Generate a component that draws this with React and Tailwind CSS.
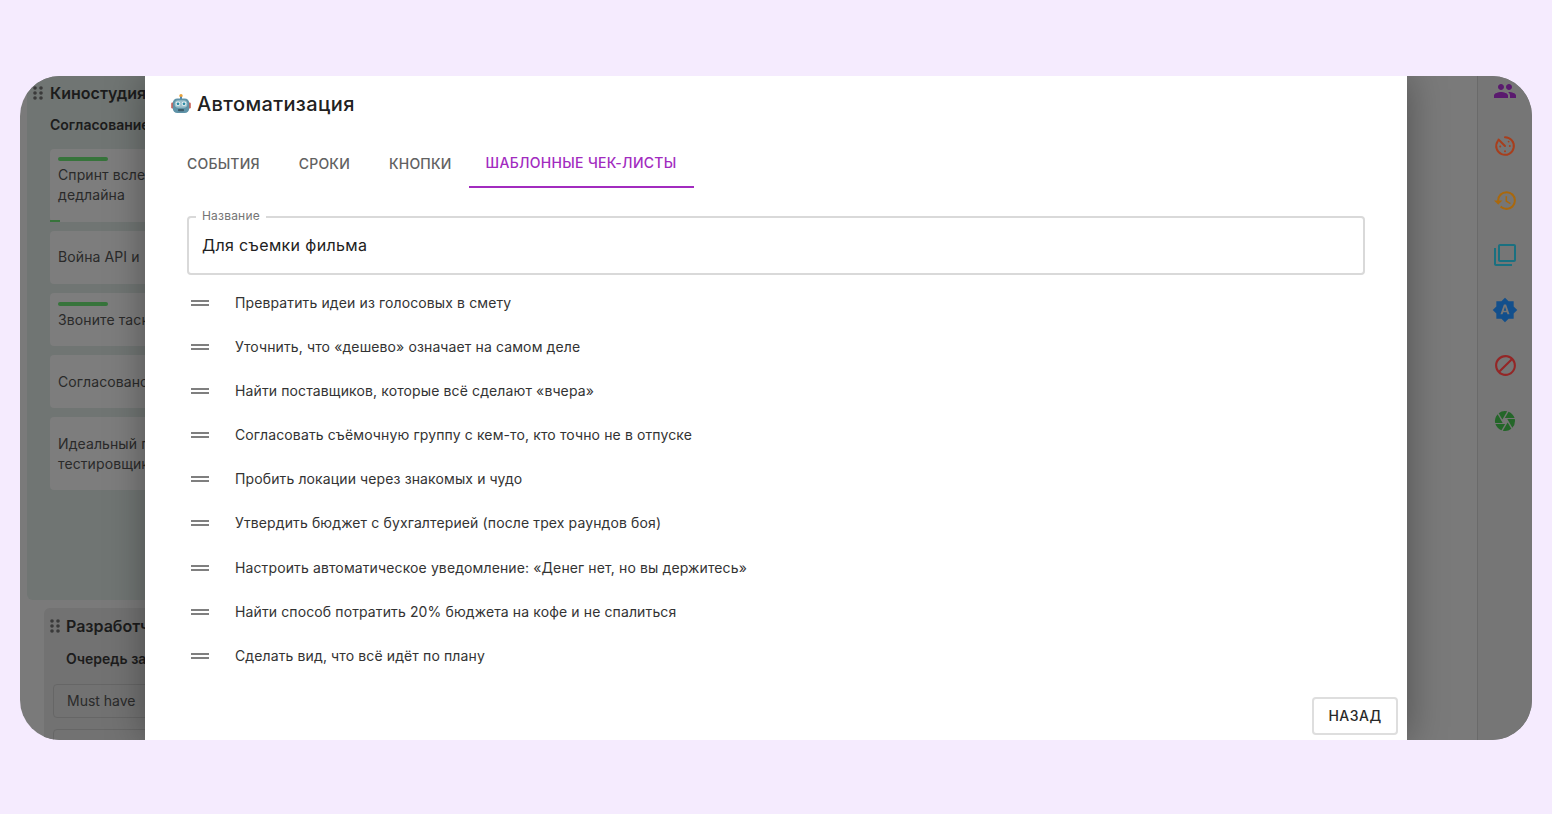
import React from "react";
import { MdPeople, MdHistory, MdFilterNone, MdBrightnessAuto, MdBlock, MdCamera } from "react-icons/md";

const F = { fontFamily: '"Inter", "Liberation Sans", sans-serif' };

const items = [
  "Превратить идеи из голосовых в смету",
  "Уточнить, что «дешево» означает на самом деле",
  "Найти поставщиков, которые всё сделают «вчера»",
  "Согласовать съёмочную группу с кем-то, кто точно не в отпуске",
  "Пробить локации через знакомых и чудо",
  "Утвердить бюджет с бухгалтерией (после трех раундов боя)",
  "Настроить автоматическое уведомление: «Денег нет, но вы держитесь»",
  "Найти способ потратить 20% бюджета на кофе и не спалиться",
  "Сделать вид, что всё идёт по плану",
];

function Grip({ className }) {
  return (
    <svg viewBox="0 0 10 14" className={className} fill="currentColor">
      <circle cx="2" cy="2" r="1.8" /><circle cx="8" cy="2" r="1.8" />
      <circle cx="2" cy="7" r="1.8" /><circle cx="8" cy="7" r="1.8" />
      <circle cx="2" cy="12" r="1.8" /><circle cx="8" cy="12" r="1.8" />
    </svg>
  );
}

function Robot() {
  return (
    <svg viewBox="0 0 20 20" className="w-5 h-5 shrink-0">
      <circle cx="10" cy="1.8" r="1.7" fill="#e9a23b" />
      <rect x="9" y="2.8" width="2" height="2.2" fill="#4f84b0" />
      <rect x="0.2" y="8.5" width="3" height="6" rx="1.2" fill="#c9625a" />
      <rect x="16.8" y="8.5" width="3" height="6" rx="1.2" fill="#c9625a" />
      <rect x="1.8" y="4.5" width="16.4" height="14.5" rx="4.5" fill="#5f93a8" />
      <rect x="3.6" y="6.2" width="12.8" height="7.6" rx="3.8" fill="#9fc1cc" />
      <circle cx="7" cy="9.8" r="2.3" fill="#e9f2f4" />
      <circle cx="13" cy="9.8" r="2.3" fill="#e9f2f4" />
      <circle cx="7" cy="9.8" r="1.4" fill="#2b8aa6" />
      <circle cx="13" cy="9.8" r="1.4" fill="#2b8aa6" />
      <rect x="7" y="15" width="6" height="2.2" rx="0.8" fill="#3d5a68" />
    </svg>
  );
}

function TimerIcon() {
  return (
    <svg viewBox="0 0 24 24" className="w-[24px] h-[24px]" fill="none" stroke="currentColor" strokeWidth="2">
      <path d="M12 3.2A8.8 8.8 0 1 1 4.8 7" strokeLinecap="round" />
      <path d="M5.5 5.5l6.5 6.5" strokeWidth="2" strokeLinecap="round" />
      <circle cx="7.2" cy="12.5" r="1" fill="currentColor" stroke="none" />
      <circle cx="12" cy="17.2" r="1" fill="currentColor" stroke="none" />
      <circle cx="16.8" cy="12" r="1" fill="currentColor" stroke="none" />
      <circle cx="15.6" cy="7.6" r="0.9" fill="currentColor" stroke="none" />
    </svg>
  );
}

function BoardCard({ children, bar, className = "" }) {
  return (
    <div className={`relative w-[200px] rounded-[4px] bg-[#7d7d7d] pl-2 pt-2 text-sm leading-5 tracking-[0.1px] text-[#2a2a2a] whitespace-nowrap ${className}`}>
      {bar && <div className="h-1 w-[50px] rounded-sm bg-[#37743b] mb-1" />}
      {children}
    </div>
  );
}

export default function App() {
  return (
    <div style={F} className="min-h-[814px] bg-[#f5ebfe] pt-[76px] px-5">
      <div className="relative h-[664px] overflow-hidden rounded-[40px] bg-[#7a7a7a] flex">
        {/* Board behind the dialog */}
        <div className="flex-1 pl-[7px] overflow-hidden">
          <div className="h-[524px] w-[300px] rounded-[6px] bg-[#707573] pt-[7px] pl-[6px]">
            <div className="flex items-center gap-[7px] text-[#1c1c1c] h-5">
              <Grip className="w-[10px] h-[14px] text-[#3a3a3a]" />
              <span className="text-base font-semibold whitespace-nowrap">Киностудия</span>
            </div>
            <div className="ml-[17px] mt-[12px] mb-[14px] text-sm font-semibold text-[#1c1c1c] whitespace-nowrap leading-5">Согласование</div>
            <div className="ml-[17px] flex flex-col gap-[9px]">
              <BoardCard bar className="h-[73px]">
                Спринт вслед<br />дедлайна
                <div className="absolute left-0 bottom-0 h-[2px] w-[10px] bg-[#37743b]" />
              </BoardCard>
              <BoardCard className="h-[53px] !pt-[16px]">Война API и</BoardCard>
              <BoardCard bar className="h-[53px] !pt-[9px]">Звоните таск</BoardCard>
              <BoardCard className="h-[53px] !pt-[17px]">Согласовано</BoardCard>
              <BoardCard className="h-[73px] !pt-[17px]">Идеальный п<br />тестировщик</BoardCard>
            </div>
          </div>
          <div className="ml-[17px] mt-[8px] w-[300px] rounded-t-[6px] bg-[#727272] pl-[6px] pt-[8px] h-[140px]">
            <div className="flex items-center gap-[6px] text-[#1c1c1c] h-5">
              <Grip className="w-[10px] h-[14px] text-[#3a3a3a]" />
              <span className="text-base font-semibold whitespace-nowrap">Разработчики</span>
            </div>
            <div className="ml-[16px] mt-[13px] text-sm font-semibold text-[#1c1c1c] whitespace-nowrap leading-5">Очередь задач</div>
            <div className="ml-[3px] mt-[15px] h-[34px] w-[200px] rounded-[4px] border border-[#666] pl-[13px] text-sm leading-[32px] text-[#2a2a2a]">Must have</div>
            <div className="ml-[3px] mt-[11px] h-[34px] w-[200px] rounded-[4px] border border-[#666]" />
          </div>
        </div>

        {/* Right rail */}
        <div className="w-[55px] shrink-0 border-l border-[#6a6a6a] bg-[#767676] flex flex-col items-center pt-[3px] gap-[30.8px]">
          <MdPeople size={24} className="text-[#5a1a6e]" />
          <div className="text-[#a83e1c]"><TimerIcon /></div>
          <MdHistory size={25} className="text-[#a9680d] -my-[0.5px]" />
          <MdFilterNone size={24} className="text-[#1a7080]" />
          <MdBrightnessAuto size={26} className="text-[#124f8c] -my-[1px]" />
          <MdBlock size={25} className="text-[#942626]" />
          <MdCamera size={24} className="text-[#246629]" />
        </div>

        {/* Dialog */}
        <div className="absolute left-[125px] top-0 bottom-0 w-[1262px] bg-white shadow-[0_0_36px_rgba(0,0,0,0.35)] text-[#212121]">
          <div className="flex items-center gap-[6px] pl-[26px] h-[56px]">
            <Robot />
            <h2 className="text-[20px] font-medium leading-[24px] tracking-[0.38px]">Автоматизация</h2>
          </div>
          <div className="flex items-start pl-[25px] h-[56px] text-sm font-medium tracking-[0.2px] uppercase text-[#616161]">
            <div className="px-[17px] h-[56px] pt-[8px] flex items-center">События</div>
            <div className="ml-[5px] px-[17px] h-[56px] pt-[8px] flex items-center">Сроки</div>
            <div className="ml-[5px] px-[17px] h-[56px] pt-[8px] flex items-center">Кнопки</div>
            <div className="px-[17px] h-[56px] pt-[8px] flex items-center text-[#a22bbf] border-b-2 border-[#a22bbf] tracking-[0.3px]">Шаблонные чек-листы</div>
          </div>

          <div className="relative mx-[42px] mt-[28px] h-[59px] w-[1178px] rounded-[4px] border-2 border-[#d9d9d9] pl-[13px] pb-[2px] flex items-center">
            <span className="absolute left-[7px] -top-[9px] bg-white px-[6px] text-xs leading-[14px] tracking-[0.2px] text-[#757575]">Название</span>
            <span className="text-base tracking-[0.35px] text-[#212121]">Для съемки фильма</span>
          </div>

          <ul className="mt-[5.9px] ml-[46px]">
            {items.map((t) => (
              <li key={t} className="flex items-center h-[44.1px] gap-[26px] text-sm tracking-[0.12px] text-[#333]">
                <svg viewBox="0 0 18 6" className="w-[18px] h-[6px] shrink-0" fill="#7f7f7f">
                  <rect x="0" y="0" width="18" height="2" />
                  <rect x="0" y="4" width="18" height="2" />
                </svg>
                <span>{t}</span>
              </li>
            ))}
          </ul>

          <button className="absolute right-[9px] bottom-[5px] w-[86px] h-[38px] rounded-[4px] border-2 border-[#dedede] bg-white text-sm font-medium tracking-[0.5px] text-[#2a2a2a]">
            НАЗАД
          </button>
        </div>
      </div>
    </div>
  );
}
